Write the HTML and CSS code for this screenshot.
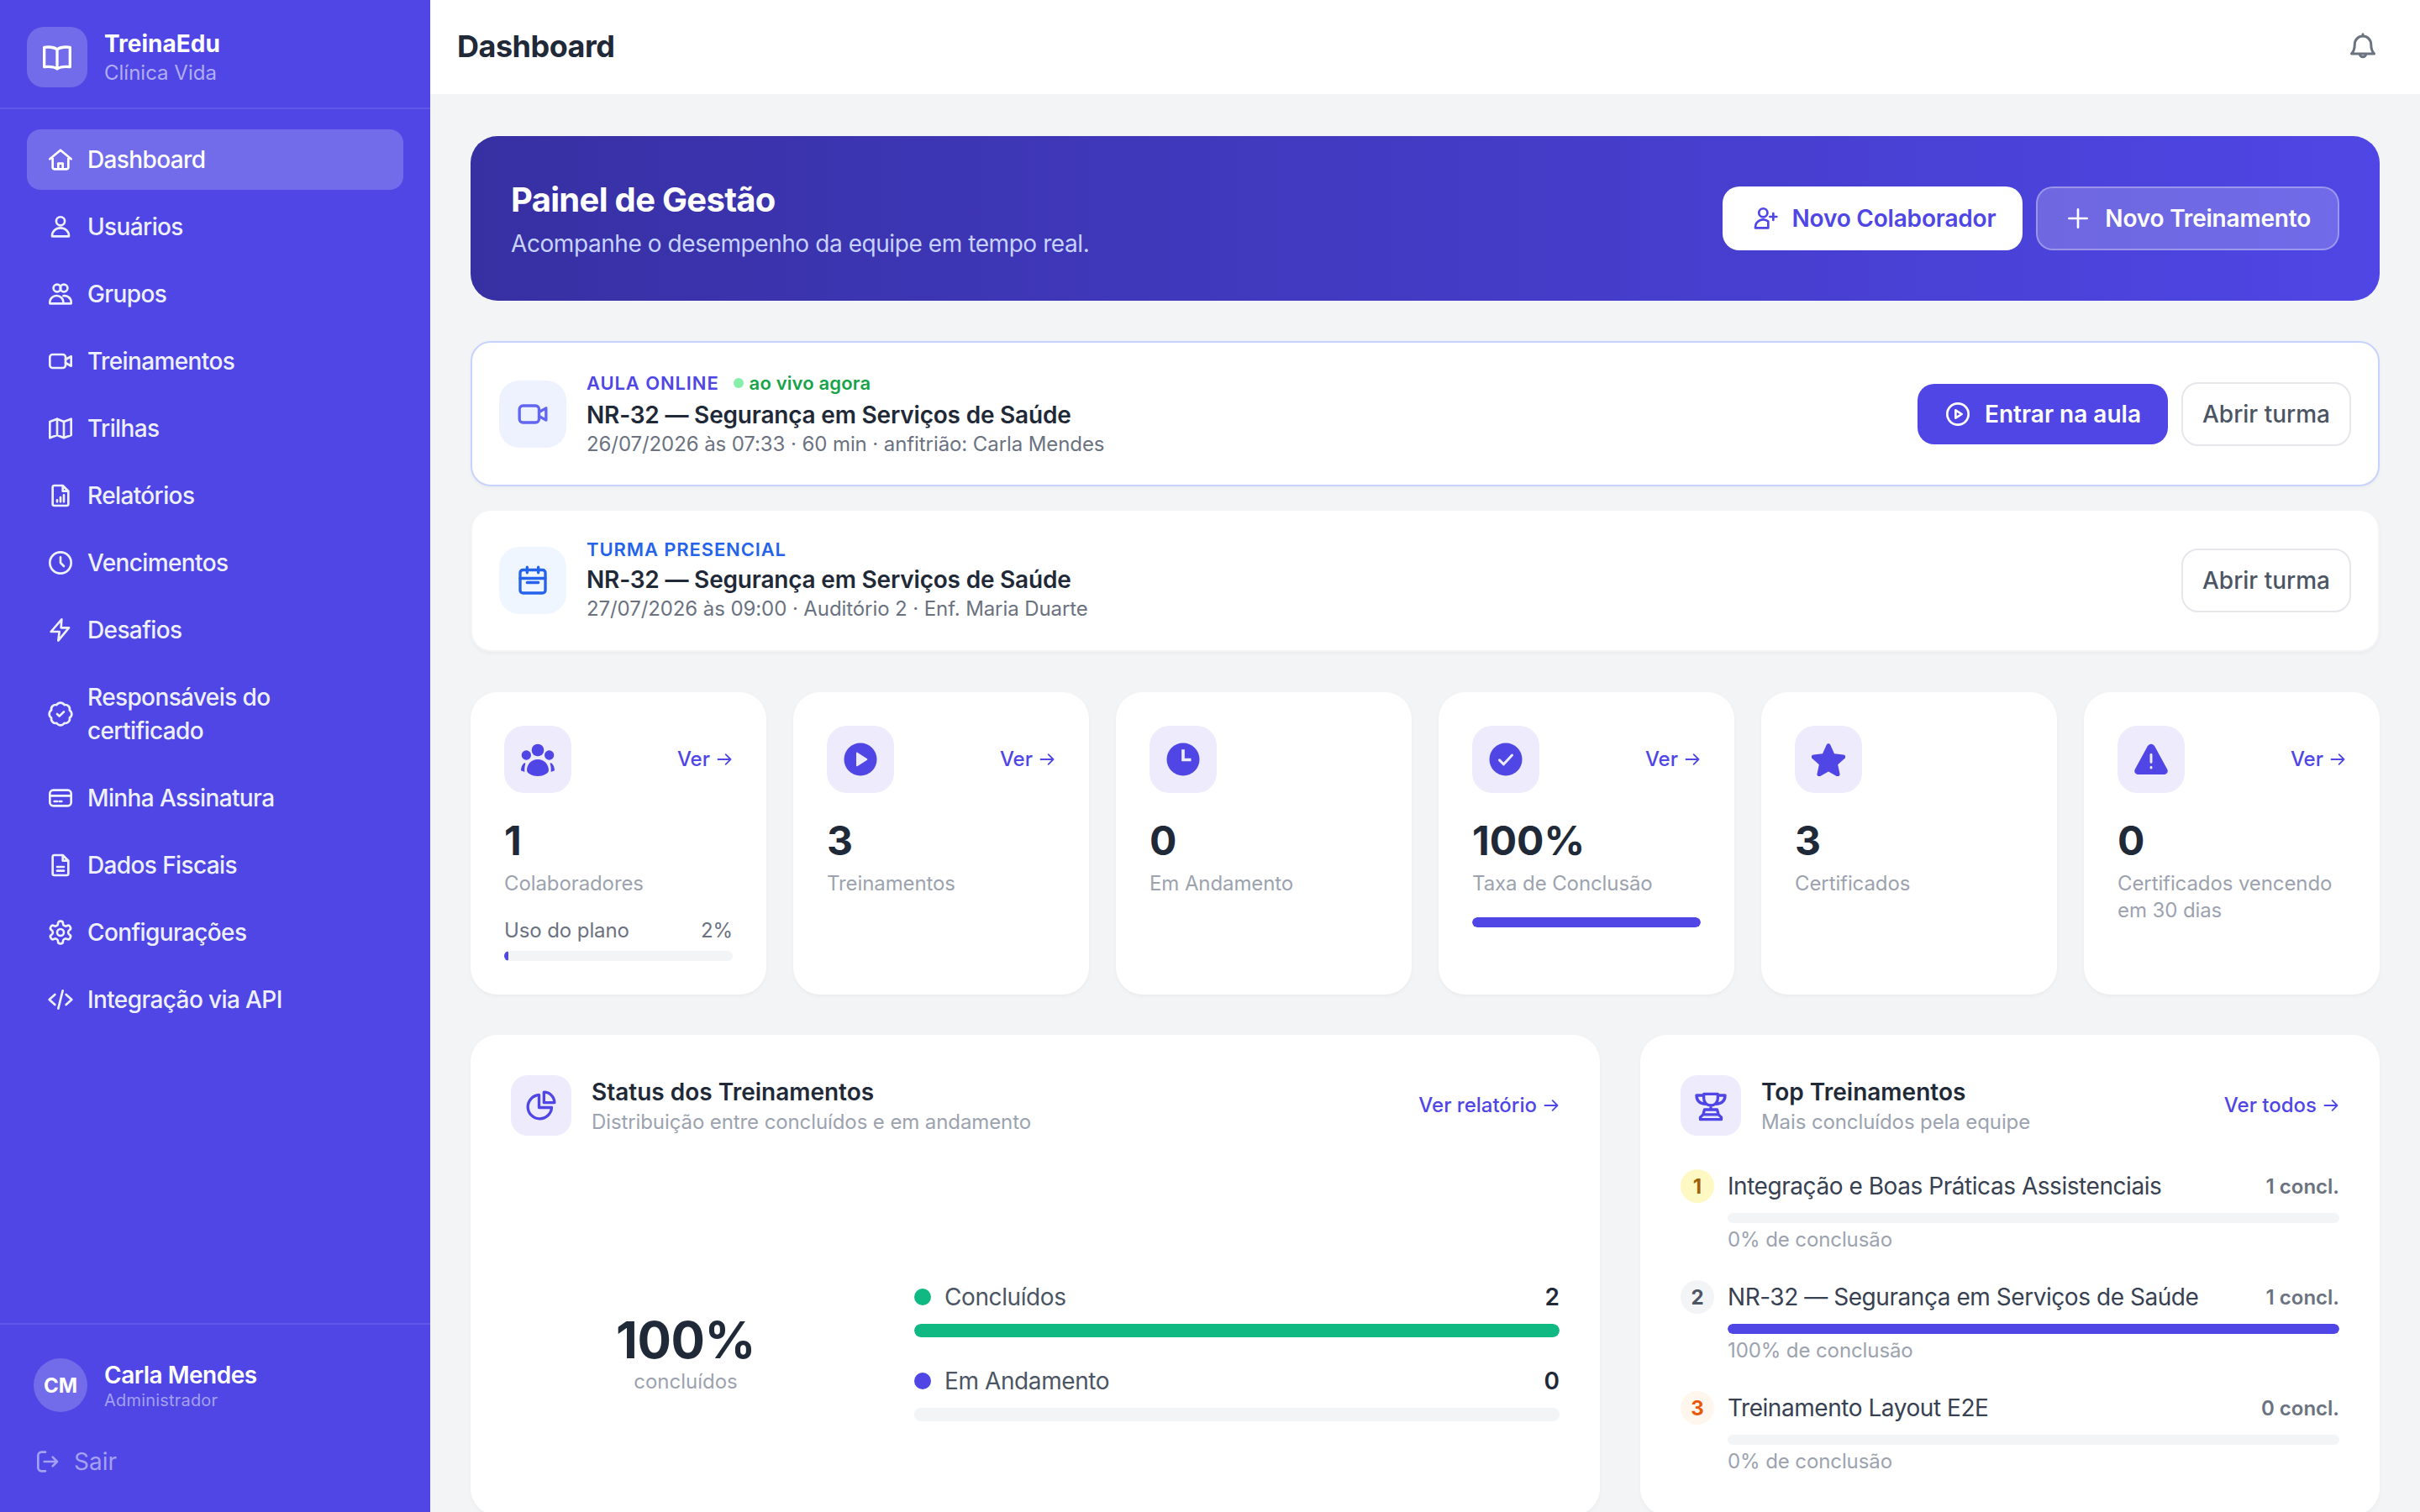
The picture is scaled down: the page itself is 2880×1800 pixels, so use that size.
FILE: index.html
```html
<!DOCTYPE html>
<html lang="pt-BR">
<head>
<meta charset="utf-8">
<title>TreinaEdu — Dashboard</title>
<link rel="stylesheet" href="styles.css">
</head>
<body>
<div class="app">
  <aside class="sidebar">
    <div class="brand">
      <div class="brand-logo">
        <svg class="ic-logo" viewBox="0 0 24 24"><path d="M12 6.600C10 5 7 4.500 2.800 5v14c4.200-.5 7.200 0 9.200 1.400 2-1.400 5-1.900 9.200-1.400V5C17 4.500 14 5 12 6.600zM12 6.600v13.800"/></svg>
      </div>
      <div class="brand-text">
        <div class="brand-name">TreinaEdu</div>
        <div class="brand-sub">Clínica Vida</div>
      </div>
    </div>
    <nav class="nav">
      <a class="nav-item active"><svg class="ic" viewBox="0 0 24 24"><path d="M2.500 11.500 12 3.500l9.500 8M5 9.500V19a1.500 1.500 0 0 0 1.500 1.500h11A1.500 1.500 0 0 0 19 19V9.500M10 20.500v-5h4v5"/></svg><span>Dashboard</span></a>
      <a class="nav-item"><svg class="ic" viewBox="0 0 24 24"><circle cx="12" cy="7" r="3.800"/><path d="M4.500 20.500v-.5a7.500 7 0 0 1 15 0v.5z"/></svg><span>Usuários</span></a>
      <a class="nav-item"><svg class="ic" viewBox="0 0 24 24"><circle cx="9" cy="6.800" r="3.300"/><circle cx="15" cy="6.800" r="3.300"/><path d="M2.500 20.500V19a6 5.500 0 0 1 12 0v1.500zM14.500 13.700a6 5.500 0 0 1 7 5.300v1.500h-7"/></svg><span>Grupos</span></a>
      <a class="nav-item"><svg class="ic" viewBox="0 0 24 24"><rect x="2.500" y="6" width="14" height="12" rx="2.500"/><path d="m16.500 10.500 5-2.800v8.600l-5-2.800"/></svg><span>Treinamentos</span></a>
      <a class="nav-item"><svg class="ic" viewBox="0 0 24 24"><path d="M2.500 6 9 3.500 15 6l6.500-2.500V18L15 20.500 9 18l-6.500 2.500zM9 3.500V18M15 6v14.500"/></svg><span>Trilhas</span></a>
      <a class="nav-item"><svg class="ic" viewBox="0 0 24 24"><path d="M6.500 3H14l5 5v11.500a1.500 1.500 0 0 1-1.500 1.500h-11A1.500 1.500 0 0 1 5 19.500v-15A1.500 1.500 0 0 1 6.500 3zM14 3v5h5M9 17.500V16M12 17.500v-4M15 17.500v-6"/></svg><span>Relatórios</span></a>
      <a class="nav-item"><svg class="ic" viewBox="0 0 24 24"><circle cx="12" cy="12" r="9.500"/><path d="M12 7v5l3 3"/></svg><span>Vencimentos</span></a>
      <a class="nav-item"><svg class="ic" viewBox="0 0 24 24"><path d="M13 2.500 3.500 13.500H11l-1 8 9.500-11.500H12.500z"/></svg><span>Desafios</span></a>
      <a class="nav-item"><svg class="ic" viewBox="0 0 24 24"><path d="M3.850 8.620a4 4 0 0 1 4.780-4.770 4 4 0 0 1 6.740 0 4 4 0 0 1 4.780 4.780 4 4 0 0 1 0 6.740 4 4 0 0 1-4.770 4.780 4 4 0 0 1-6.750 0 4 4 0 0 1-4.780-4.770 4 4 0 0 1 0-6.760zM9 12l2 2 4-4"/></svg><span>Responsáveis do certificado</span></a>
      <a class="nav-item"><svg class="ic" viewBox="0 0 24 24"><rect x="2.500" y="5" width="19" height="14" rx="3"/><path d="M2.500 10h19M6.500 15H9M11 15h2"/></svg><span>Minha Assinatura</span></a>
      <a class="nav-item"><svg class="ic" viewBox="0 0 24 24"><path d="M6.500 3H14l5 5v11.500a1.500 1.500 0 0 1-1.500 1.500h-11A1.500 1.500 0 0 1 5 19.500v-15A1.500 1.500 0 0 1 6.500 3zM14 3v5h5M9 13.500h6M9 17h6"/></svg><span>Dados Fiscais</span></a>
      <a class="nav-item"><svg class="ic" viewBox="0 0 24 24"><path d="M12.220 2h-.44a2 2 0 0 0-2 2v.18a2 2 0 0 1-1 1.730l-.43.25a2 2 0 0 1-2 0l-.15-.08a2 2 0 0 0-2.730.73l-.22.38a2 2 0 0 0 .73 2.730l.15.1a2 2 0 0 1 1 1.720v.51a2 2 0 0 1-1 1.740l-.15.09a2 2 0 0 0-.73 2.730l.22.38a2 2 0 0 0 2.730.73l.15-.08a2 2 0 0 1 2 0l.43.25a2 2 0 0 1 1 1.730V20a2 2 0 0 0 2 2h.44a2 2 0 0 0 2-2v-.18a2 2 0 0 1 1-1.730l.43-.25a2 2 0 0 1 2 0l.15.08a2 2 0 0 0 2.730-.73l.22-.39a2 2 0 0 0-.73-2.730l-.15-.08a2 2 0 0 1-1-1.740v-.5a2 2 0 0 1 1-1.740l.15-.09a2 2 0 0 0 .73-2.730l-.22-.38a2 2 0 0 0-2.730-.73l-.15.08a2 2 0 0 1-2 0l-.43-.25a2 2 0 0 1-1-1.730V4a2 2 0 0 0-2-2z"/><circle cx="12" cy="12" r="3"/></svg><span>Configurações</span></a>
      <a class="nav-item"><svg class="ic" viewBox="0 0 24 24"><path d="M7 7.500 2 12l5 4.500M17 7.500l5 4.500-5 4.500M14 4l-4 16"/></svg><span>Integração via API</span></a>
    </nav>
    <div class="side-foot">
      <div class="user">
        <div class="avatar">CM</div>
        <div>
          <div class="user-name">Carla Mendes</div>
          <div class="user-role">Administrador</div>
        </div>
      </div>
      <a class="logout"><svg class="ic" viewBox="0 0 24 24"><path d="M10.500 3.500H7A3 3 0 0 0 4 6.500v11a3 3 0 0 0 3 3h3.500M9.500 12H21M17 8l4 4-4 4"/></svg><span>Sair</span></a>
    </div>
  </aside>

  <div class="content">
    <header class="topbar">
      <h1 class="page-title">Dashboard</h1>
      <svg class="ic bell" viewBox="0 0 24 24"><path d="M12 2.500V4M12 4a6.500 6.500 0 0 0-6.500 6.500c0 4.500-1 6-2.500 7.500h18c-1.500-1.500-2.500-3-2.500-7.500A6.500 6.500 0 0 0 12 4zM9.500 18a2.500 2.500 0 0 0 5 0"/></svg>
    </header>
    <main class="main">
      <section class="hero">
        <div>
          <h2 class="hero-title">Painel de Gestão</h2>
          <p class="hero-sub">Acompanhe o desempenho da equipe em tempo real.</p>
        </div>
        <div class="hero-actions">
          <a class="btn btn-white"><svg class="ic" viewBox="0 0 24 24"><circle cx="10" cy="7" r="3.800"/><path d="M3 20.500V20a7 7 0 0 1 11.500-5.300V20.500zM19 7.500v6M16 10.500h6"/></svg>Novo Colaborador</a>
          <a class="btn btn-ghost"><svg class="ic" viewBox="0 0 24 24"><path d="M12 4v16M4 12h16"/></svg>Novo Treinamento</a>
        </div>
      </section>

      <section class="sessions">
        <article class="session session-live">
          <div class="session-icon si-indigo"><svg class="ic-40" viewBox="0 0 24 24"><rect x="2.500" y="6" width="14" height="12" rx="2.500"/><path d="m16.500 10.500 5-2.800v8.600l-5-2.800"/></svg></div>
          <div class="session-body">
            <div class="session-tag-row"><span class="tag tag-indigo">AULA ONLINE</span><span class="live"><i class="live-dot"></i>ao vivo agora</span></div>
            <div class="session-title">NR-32 — Segurança em Serviços de Saúde</div>
            <div class="session-meta">26/07/2026 às 07:33 · 60 min · anfitrião: Carla Mendes</div>
          </div>
          <a class="btn btn-primary"><svg class="ic" viewBox="0 0 24 24"><circle cx="12" cy="12" r="9.500"/><path d="M10 8.500v7l5.500-3.500z"/></svg>Entrar na aula</a>
          <a class="btn btn-outline">Abrir turma</a>
        </article>
        <article class="session session-class">
          <div class="session-icon si-blue"><svg class="ic-40" viewBox="0 0 24 24"><rect x="3" y="4.500" width="18" height="16.500" rx="2"/><path d="M8 2.500v4M16 2.500v4M3 10.500h18M8 13.500h8"/></svg></div>
          <div class="session-body">
            <div class="session-tag-row short"><span class="tag tag-blue">TURMA PRESENCIAL</span></div>
            <div class="session-title">NR-32 — Segurança em Serviços de Saúde</div>
            <div class="session-meta">27/07/2026 às 09:00 · Auditório 2 · Enf. Maria Duarte</div>
          </div>
          <a class="btn btn-outline">Abrir turma</a>
        </article>
      </section>

      <section class="stats">
        <article class="stat">
          <div class="stat-top">
            <div class="stat-icon"><svg class="solid" viewBox="0 0 24 24"><circle cx="12" cy="5.400" r="4.400"/><circle cx="3.800" cy="9" r="3.400"/><circle cx="20.200" cy="9" r="3.400"/><path d="M12 12C16.500 12 19.800 15.500 19.800 19.800 19.800 22 16 24 12 24S4.200 22 4.200 19.800C4.200 15.500 7.500 12 12 12zM2.600 14.400C.8 15.500 0 18 0 20l2.600 1C2.400 19 2.700 16.800 3.200 15zM21.400 14.400C23.200 15.500 24 18 24 20l-2.600 1c.2-2-.1-4.200-.6-6z"/></svg></div>
            <a class="ver">Ver <svg class="arrow" viewBox="0 0 24 24"><path d="M3 12h18M14 5l7 7-7 7"/></svg></a>
          </div>
          <div class="stat-value">1</div>
          <div class="stat-label">Colaboradores</div>
          <div class="usage"><span>Uso do plano</span><span>2%</span></div>
          <div class="track usage-track"><div class="fill" style="width:2%"></div></div>
        </article>
        <article class="stat">
          <div class="stat-top">
            <div class="stat-icon"><svg class="solid" viewBox="0 0 24 24"><circle cx="12" cy="12" r="11.700"/><path class="cut" d="M9.500 7.500v9l7-4.500z"/></svg></div>
            <a class="ver">Ver <svg class="arrow" viewBox="0 0 24 24"><path d="M3 12h18M14 5l7 7-7 7"/></svg></a>
          </div>
          <div class="stat-value">3</div>
          <div class="stat-label">Treinamentos</div>
        </article>
        <article class="stat">
          <div class="stat-top">
            <div class="stat-icon"><svg class="solid" viewBox="0 0 24 24"><circle cx="12" cy="12" r="11.700"/><path class="cut-line" d="M12 5v7.300h5.700"/></svg></div>
          </div>
          <div class="stat-value">0</div>
          <div class="stat-label">Em Andamento</div>
        </article>
        <article class="stat">
          <div class="stat-top">
            <div class="stat-icon"><svg class="solid" viewBox="0 0 24 24"><circle cx="12" cy="12" r="11.700"/><path class="cut-line thin" d="m7.500 12.500 3 3 6-6.500"/></svg></div>
            <a class="ver">Ver <svg class="arrow" viewBox="0 0 24 24"><path d="M3 12h18M14 5l7 7-7 7"/></svg></a>
          </div>
          <div class="stat-value">100%</div>
          <div class="stat-label">Taxa de Conclusão</div>
          <div class="track rate-track"><div class="fill" style="width:100%"></div></div>
        </article>
        <article class="stat">
          <div class="stat-top">
            <div class="stat-icon"><svg class="solid" viewBox="0 0 24 24"><path d="M12 .8c.7 0 1.200.4 1.500 1.100l2.700 6.100 6.600.7c1.400.2 1.900 1.700.9 2.600l-5 4.500 1.400 6.500c.3 1.400-1.100 2.400-2.300 1.700L12 20.700l-5.800 3.300c-1.200.7-2.600-.3-2.300-1.700l1.400-6.500-5-4.500c-1-.9-.5-2.400.9-2.600l6.600-.7 2.700-6.100C10.800 1.200 11.300.8 12 .8z"/></svg></div>
          </div>
          <div class="stat-value">3</div>
          <div class="stat-label">Certificados</div>
        </article>
        <article class="stat">
          <div class="stat-top">
            <div class="stat-icon"><svg class="solid" viewBox="0 0 24 24"><path d="M12 1c1 0 1.900.5 2.500 1.500l9 16.500c1 2-.2 3.800-2.500 3.800H3c-2.300 0-3.500-1.800-2.500-3.800l9-16.500C10.100 1.500 11 1 12 1z"/><path class="cut-line thin" d="M12 8.500V14M12 17.500v.5"/></svg></div>
            <a class="ver">Ver <svg class="arrow" viewBox="0 0 24 24"><path d="M3 12h18M14 5l7 7-7 7"/></svg></a>
          </div>
          <div class="stat-value">0</div>
          <div class="stat-label">Certificados vencendo em 30 dias</div>
        </article>
      </section>

      <section class="panels">
        <article class="panel panel-status">
          <div class="panel-head">
            <div class="panel-icon"><svg class="ic-40" viewBox="0 0 24 24"><path d="M10.500 4.500a8.500 8.500 0 1 0 9 9h-9zM14 2.500a7.500 7.500 0 0 1 7.500 7.500H14z"/></svg></div>
            <div class="panel-heading">
              <div class="panel-title">Status dos Treinamentos</div>
              <div class="panel-sub">Distribuição entre concluídos e em andamento</div>
            </div>
            <a class="ver">Ver relatório <svg class="arrow" viewBox="0 0 24 24"><path d="M3 12h18M14 5l7 7-7 7"/></svg></a>
          </div>
          <div class="status-body">
            <div class="status-total">
              <div class="status-num">100%</div>
              <div class="status-cap">concluídos</div>
            </div>
            <div class="status-bars">
              <div class="status-row">
                <div class="status-line"><i class="dot dot-green"></i><span class="status-name">Concluídos</span><b class="status-count">2</b></div>
                <div class="track status-track"><div class="fill fill-green" style="width:100%"></div></div>
              </div>
              <div class="status-row">
                <div class="status-line"><i class="dot dot-indigo"></i><span class="status-name">Em Andamento</span><b class="status-count">0</b></div>
                <div class="track status-track"><div class="fill" style="width:0%"></div></div>
              </div>
            </div>
          </div>
        </article>
        <article class="panel panel-top">
          <div class="panel-head">
            <div class="panel-icon"><svg class="ic-40" viewBox="0 0 24 24"><path d="M7 3.800h10V7a5 5 0 0 1-10 0zM7 4.800H1.800C1.800 8 3.500 10.500 7.800 11M17 4.800h5.200C22.200 8 20.500 10.500 16.200 11M12 12v3M7.500 15h9l1 3.500h-11zM6.500 18.500h11l2 2V22h-15v-1.500z"/></svg></div>
            <div class="panel-heading">
              <div class="panel-title">Top Treinamentos</div>
              <div class="panel-sub">Mais concluídos pela equipe</div>
            </div>
            <a class="ver">Ver todos <svg class="arrow" viewBox="0 0 24 24"><path d="M3 12h18M14 5l7 7-7 7"/></svg></a>
          </div>
          <ol class="rank">
            <li class="rank-item">
              <span class="rank-badge rb-1">1</span>
              <div class="rank-body">
                <div class="rank-line"><span class="rank-name">Integração e Boas Práticas Assistenciais</span><span class="rank-count">1 concl.</span></div>
                <div class="track rank-track"><div class="fill" style="width:0%"></div></div>
                <div class="rank-pct">0% de conclusão</div>
              </div>
            </li>
            <li class="rank-item">
              <span class="rank-badge rb-2">2</span>
              <div class="rank-body">
                <div class="rank-line"><span class="rank-name">NR-32 — Segurança em Serviços de Saúde</span><span class="rank-count">1 concl.</span></div>
                <div class="track rank-track"><div class="fill" style="width:100%"></div></div>
                <div class="rank-pct">100% de conclusão</div>
              </div>
            </li>
            <li class="rank-item">
              <span class="rank-badge rb-3">3</span>
              <div class="rank-body">
                <div class="rank-line"><span class="rank-name">Treinamento Layout E2E</span><span class="rank-count">0 concl.</span></div>
                <div class="track rank-track"><div class="fill" style="width:0%"></div></div>
                <div class="rank-pct">0% de conclusão</div>
              </div>
            </li>
          </ol>
        </article>
      </section>
    </main>
  </div>
</div>
</body>
</html>
```
FILE: styles.css
```css
* { box-sizing: border-box; }
html, body { margin: 0; height: 100%; }
body { font-family: Inter, "Noto Sans", sans-serif; background: #f3f4f6; color: #1f2937; overflow: hidden; }
a { color: inherit; text-decoration: none; }
h1, h2, p, ol { margin: 0; padding: 0; }
svg { fill: none; stroke: currentColor; stroke-linecap: round; stroke-linejoin: round; flex: none; }
.ic { width: 32px; height: 32px; stroke-width: 2; }
.ic-40 { width: 40px; height: 40px; stroke-width: 2; }
.ic-logo { width: 40px; height: 40px; stroke-width: 2; }

.app { display: flex; height: 1800px; width: 2880px; overflow: hidden; }

/* Sidebar */
.sidebar { width: 512px; flex: none; background: #4f46e5; color: #fff; display: flex; flex-direction: column; }
.brand { display: flex; align-items: center; gap: 20px; padding: 32px 32px 24px; border-bottom: 2px solid #6058e8; }
.brand-logo { width: 72px; height: 72px; border-radius: 20px; background: #726bea; display: flex; align-items: center; justify-content: center; }
.brand-name { font-size: 28px; line-height: 38px; font-weight: 700; }
.brand-sub { font-size: 24px; line-height: 32px; color: #b0adf3; }
.nav { flex: 1; display: flex; flex-direction: column; gap: 8px; padding: 24px 32px; }
.nav-item { display: flex; align-items: center; gap: 16px; padding: 16px 24px; font-size: 28px; line-height: 40px; font-weight: 500; letter-spacing: -.62px; border-radius: 16px; color: #eef0ff; }
.nav-item.active { background: #726bea; color: #fff; }
.side-foot { border-top: 2px solid #6058e8; padding: 40px 40px 0; height: 225px; }
.user { display: flex; align-items: center; gap: 20px; }
.avatar { width: 64px; height: 64px; border-radius: 50%; background: #726bea; display: flex; align-items: center; justify-content: center; font-size: 24px; font-weight: 700; }
.user-name { font-size: 28px; line-height: 36px; font-weight: 600; letter-spacing: -.5px; padding-top: 2px; }
.user-role { font-size: 20px; line-height: 28px; color: #a4a0f2; letter-spacing: .2px; margin-top: -2px; }
.logout { display: flex; align-items: center; gap: 16px; margin-top: 39px; font-size: 28px; line-height: 40px; color: #a4a0f2; }

/* Content */
.content { flex: 1; min-width: 0; display: flex; flex-direction: column; }
.topbar { height: 114px; flex: none; background: #fff; border-bottom: 2px solid #f3f4f6; display: flex; align-items: center; justify-content: space-between; padding: 0 52px 2px 32px; }
.page-title { font-size: 36px; line-height: 48px; font-weight: 700; letter-spacing: -.5px; color: #1f2937; }
.bell { color: #6b7280; width: 36px; height: 36px; margin-right: -2px; }
.main { padding: 48px; display: flex; flex-direction: column; gap: 48px; }

/* Hero */
.hero { height: 196px; border-radius: 32px; background: linear-gradient(90deg, #3730a3, #4f46e5); padding: 0 48px; display: flex; align-items: center; justify-content: space-between; color: #fff; }
.hero-title { font-size: 40px; line-height: 56px; font-weight: 700; letter-spacing: -.7px; }
.hero-sub { font-size: 28px; line-height: 40px; color: #c7d2fe; margin-top: 4px; letter-spacing: -.43px; }
.hero-actions { display: flex; gap: 16px; }

/* Buttons */
.btn { display: flex; align-items: center; gap: 16px; height: 76px; padding: 0 32px; border-radius: 20px; font-size: 28px; font-weight: 600; white-space: nowrap; }
.btn-white { background: #fff; color: #4f46e5; letter-spacing: -.2px; padding-left: 35px; }
.btn-ghost { background: rgba(255,255,255,.2); border: 2px solid rgba(255,255,255,.3); color: #fff; letter-spacing: -.2px; }
.btn-primary { background: #4f46e5; color: #fff; height: 72px; }
.btn-outline { background: #fff; border: 2px solid #e5e7eb; color: #4b5563; font-weight: 500; padding: 0 23px; }

/* Sessions */
.sessions { display: flex; flex-direction: column; gap: 27px; }
.session { display: flex; align-items: center; gap: 16px; padding: 32px; border: 2px solid #f3f4f6; border-radius: 24px; background: #fff; box-shadow: 0 2px 4px rgba(0,0,0,.04); }
.session-live { border-color: #c7d2fe; }
.session-class { padding-bottom: 33px; }
.session-icon { width: 80px; height: 80px; border-radius: 24px; display: flex; align-items: center; justify-content: center; margin-right: 8px; }
.si-indigo { background: #eef2ff; color: #6366f1; }
.si-blue { background: #eff6ff; color: #2563eb; }
.session-body { flex: 1; min-width: 0; }
.session-tag-row { display: flex; align-items: center; gap: 17px; height: 32px; }
.session-tag-row.short { height: 28px; }
.tag { font-size: 22px; font-weight: 600; letter-spacing: .88px; }
.tag-indigo { color: #4f46e5; }
.tag-blue { color: #2563eb; }
.live { display: flex; align-items: center; gap: 7px; font-size: 22px; font-weight: 600; letter-spacing: .15px; color: #16a34a; }
.live-dot { width: 12px; height: 12px; border-radius: 50%; background: #86efac; }
.session-title { font-size: 28px; line-height: 36px; font-weight: 600; letter-spacing: -.2px; color: #1f2937; margin-top: 4px; }
.session-meta { font-size: 24px; line-height: 33px; color: #6b7280; letter-spacing: -.09px; }

/* Stats */
.stats { display: grid; grid-template-columns: repeat(6, 1fr); gap: 32px; }
.stat { background: #fff; border-radius: 32px; padding: 40px; box-shadow: 0 2px 4px rgba(0,0,0,.04); }
.stat-top { display: flex; align-items: center; justify-content: space-between; }
.stat-icon { width: 80px; height: 80px; border-radius: 24px; background: #edebfc; display: flex; align-items: center; justify-content: center; color: #4f46e5; }
.solid { width: 40px; height: 40px; fill: currentColor; stroke: none; }
.cut { fill: #edebfc; stroke: #edebfc; stroke-width: 1; }
.cut-line { fill: none; stroke: #edebfc; stroke-width: 2.200; stroke-linecap: butt; stroke-linejoin: miter; }
.cut-line.thin { stroke-width: 1.800; stroke-linecap: round; stroke-linejoin: round; }
.ver { display: inline-flex; align-items: center; gap: 7px; font-size: 24px; line-height: 32px; font-weight: 500; color: #4f46e5; }
.arrow { width: 20px; height: 20px; stroke-width: 2.200; }
.stat-value { font-size: 48px; line-height: 64px; font-weight: 700; color: #1f2937; margin-top: 25px; }
.stat-label { font-size: 24px; line-height: 32px; color: #9ca3af; margin-top: 3px; letter-spacing: -.1px; }
.usage { display: flex; justify-content: space-between; font-size: 24px; line-height: 32px; color: #6b7280; margin-top: 24px; letter-spacing: -.1px; }
.track { background: #f3f4f6; border-radius: 999px; overflow: hidden; }
.fill { height: 100%; background: #4f46e5; border-radius: 999px; }
.usage-track { height: 12px; margin-top: 8px; }
.rate-track { height: 12px; margin-top: 24px; }

/* Panels */
.panels { display: grid; grid-template-columns: repeat(5, 1fr); gap: 48px; }
.panel { background: #fff; border-radius: 32px; padding: 48px; box-shadow: 0 2px 4px rgba(0,0,0,.04); }
.panel-status { grid-column: span 3; }
.panel-top { grid-column: span 2; }
.panel-head { display: flex; align-items: center; gap: 24px; }
.panel-icon { width: 72px; height: 72px; border-radius: 20px; background: #edebfc; color: #4f46e5; display: flex; align-items: center; justify-content: center; }
.panel-heading { flex: 1; }
.panel-title { font-size: 28px; line-height: 40px; font-weight: 600; color: #1f2937; }
.panel-sub { font-size: 24px; line-height: 32px; color: #9ca3af; letter-spacing: -.1px; }

.status-body { display: flex; align-items: center; gap: 64px; padding-top: 176px; }
.status-total { width: 416px; text-align: center; }
.status-num { font-size: 60px; line-height: 72px; font-weight: 700; letter-spacing: -.4px; color: #1f2937; }
.status-cap { font-size: 24px; line-height: 32px; color: #9ca3af; margin-top: -2px; }
.status-bars { flex: 1; display: flex; flex-direction: column; gap: 36px; }
.status-line { display: flex; align-items: center; gap: 16px; height: 32px; font-size: 28px; }
.dot { width: 20px; height: 20px; border-radius: 50%; }
.dot-green { background: #10b981; }
.dot-indigo { background: #4f46e5; }
.status-name { flex: 1; color: #4b5563; letter-spacing: -.4px; }
.status-count { font-weight: 600; color: #1f2937; }
.status-track { height: 16px; margin-top: 16px; }
.fill-green { background: #10b981; }

.rank { list-style: none; margin-top: 40px; display: flex; flex-direction: column; gap: 32px; }
.rank-item { display: flex; gap: 16px; }
.rank-badge { width: 40px; height: 40px; border-radius: 50%; flex: none; display: flex; align-items: center; justify-content: center; font-size: 24px; font-weight: 700; }
.rb-1 { background: #fef9c3; color: #a16207; }
.rb-2 { background: #f3f4f6; color: #4b5563; }
.rb-3 { background: #fff7ed; color: #ea580c; }
.rank-body { flex: 1; min-width: 0; }
.rank-line { display: flex; align-items: center; justify-content: space-between; height: 40px; }
.rank-name { font-size: 28px; color: #374151; letter-spacing: -.45px; }
.rank-count { font-size: 24px; font-weight: 600; color: #6b7280; }
.rank-track { height: 12px; margin-top: 12px; }
.rank-pct { font-size: 24px; line-height: 32px; color: #9ca3af; margin-top: 4px; letter-spacing: -.1px; }
```
